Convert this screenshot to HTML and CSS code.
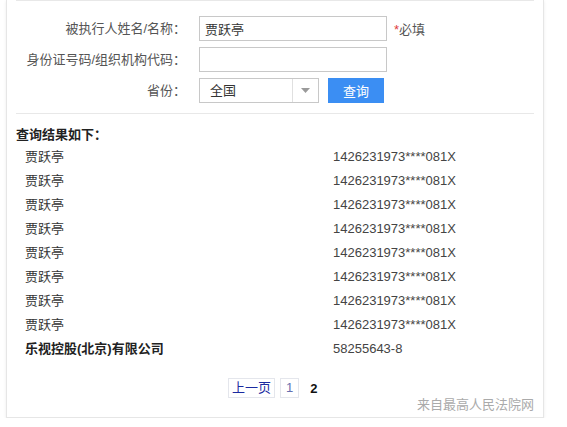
FILE: index.html
```html
<!DOCTYPE html>
<html lang="zh-CN">
<head>
<meta charset="utf-8">
<link rel="stylesheet" href="styles.css">
</head>
<body>
<div class="card">
  <div class="rule"></div>
  <form class="form">
    <label class="label">被执行人姓名/名称：</label>
    <div class="field"><input class="input" type="text" value="贾跃亭"><span class="req"><i>*</i>必填</span></div>
    <label class="label">身份证号码/组织机构代码：</label>
    <div class="field"><input class="input" type="text" value=""></div>
    <label class="label">省份：</label>
    <div class="field">
      <div class="select"><span class="select-text">全国</span><span class="select-arrow"><svg width="9" height="5" viewBox="0 0 9 5"><path d="M0 0h9L4.5 5z" fill="#9a9a9a"/></svg></span></div>
      <button type="button" class="btn">查询</button>
    </div>
  </form>
  <div class="rule"></div>
  <div class="results">
    <div class="results-title">查询结果如下：</div>
    <div class="row"><span class="name">贾跃亭</span><span class="code">1426231973****081X</span></div>
    <div class="row"><span class="name">贾跃亭</span><span class="code">1426231973****081X</span></div>
    <div class="row"><span class="name">贾跃亭</span><span class="code">1426231973****081X</span></div>
    <div class="row"><span class="name">贾跃亭</span><span class="code">1426231973****081X</span></div>
    <div class="row"><span class="name">贾跃亭</span><span class="code">1426231973****081X</span></div>
    <div class="row"><span class="name">贾跃亭</span><span class="code">1426231973****081X</span></div>
    <div class="row"><span class="name">贾跃亭</span><span class="code">1426231973****081X</span></div>
    <div class="row"><span class="name">贾跃亭</span><span class="code">1426231973****081X</span></div>
    <div class="row"><span class="name bold">乐视控股(北京)有限公司</span><span class="code">58255643-8</span></div>
  </div>
  <div class="pager">
    <a class="page-link">上一页</a>
    <a class="page-link">1</a>
    <span class="page-current">2</span>
  </div>
  <div class="source">来自最高人民法院网</div>
</div>
</body>
</html>
```

FILE: styles.css
```css
html, body {
  margin: 0;
  padding: 0;
  background: #fff;
}
body {
  font-family: "Liberation Sans", "Noto Sans CJK SC", sans-serif;
  font-size: 13px;
  color: #333;
}
.card {
  margin-left: 6px;
  width: 538px;
  height: 418px;
  box-sizing: border-box;
  border: 1px solid #e6e6e6;
  border-top: none;
  box-shadow: 0 1px 3px rgba(0,0,0,0.08);
  padding: 0 9px;
}
.rule {
  height: 1px;
  background: #e8e8e8;
}
.form {
  display: grid;
  grid-template-columns: 170px 1fr;
  column-gap: 13px;
  row-gap: 6px;
  padding: 15px 0 10px;
  margin: 0;
}
.label {
  text-align: right;
  line-height: 25px;
  height: 25px;
  color: #555;
}
.field {
  display: flex;
  align-items: center;
  height: 25px;
}
.input {
  box-sizing: border-box;
  width: 188px;
  height: 25px;
  border: 1px solid #c8c8c8;
  padding: 0 5px;
  margin: 0;
  font: inherit;
  color: #333;
  outline: none;
}
.req {
  margin-left: 7px;
  color: #555;
}
.req i {
  font-style: normal;
  color: #e03c3c;
}
.select {
  box-sizing: border-box;
  width: 120px;
  height: 25px;
  border: 1px solid #c8c8c8;
  display: flex;
}
.select-text {
  flex: 1;
  line-height: 23px;
  padding-left: 10px;
}
.select-arrow {
  width: 25px;
  border-left: 1px solid #e0e0e0;
  display: flex;
  align-items: center;
  justify-content: center;
}
.select-arrow svg { display: block; }
.btn {
  margin-left: 9px;
  width: 56px;
  height: 25px;
  border: none;
  background: #3b8ef3;
  color: #fff;
  font: inherit;
  padding: 0;
}
.results {
  padding-top: 11px;
}
.results-title {
  font-weight: bold;
  line-height: 20px;
  color: #222;
}
.row {
  display: flex;
  line-height: 24px;
  padding-left: 9px;
}
.name {
  width: 308px;
}
.bold {
  font-weight: bold;
  color: #222;
}
.code {
  color: #444;
}
.pager {
  display: flex;
  align-items: center;
  gap: 5px;
  margin-top: 17px;
  padding-left: 212px;
}
.page-link {
  border: 1px solid #e4e6ec;
  padding: 0 3px;
  line-height: 18px;
  color: #1a2aa0;
}
.page-link + .page-link {
  padding: 0 5px;
  color: #6670b0;
}
.page-current {
  font-weight: bold;
  color: #111;
  padding-left: 6px;
}
.source {
  text-align: right;
  color: #aaa;
  line-height: 16px;
  margin-top: -1px;
}
```
